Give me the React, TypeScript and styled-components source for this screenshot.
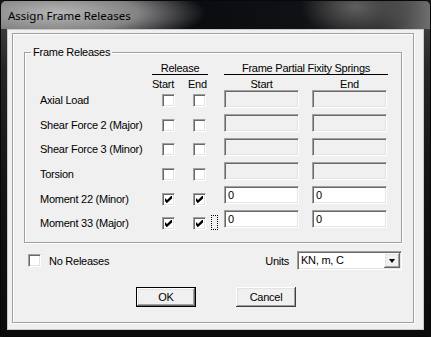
import { Fragment } from "react";
import { createGlobalStyle, styled } from "styled-components";

const GlobalStyle = createGlobalStyle`
  html, body {
    margin: 0;
    padding: 0;
    background: #151515;
  }
  body {
    font-family: "Liberation Sans", Arial, sans-serif;
    font-size: 11px;
    letter-spacing: -0.25px;
    color: #000;
  }
`;

const Window = styled.div`
  width: 431px;
  height: 337px;
  box-sizing: border-box;
  display: flex;
  flex-direction: column;
  border: 1px solid #080808;
  border-radius: 6px 6px 3px 3px;
  overflow: hidden;
  background: linear-gradient(180deg, #4a4a4a 0%, #262626 20%, #141414 55%, #0b0b0b 100%);
`;

const TitleBar = styled.div`
  height: 28px;
  flex: none;
  display: flex;
  align-items: center;
  padding-left: 7px;
  font-family: "Noto Sans", "Open Sans", sans-serif;
  font-size: 11.5px;
  letter-spacing: 0;
  color: #000;
  background:
    radial-gradient(ellipse 150px 34px at 55px 12px, rgba(190, 190, 190, 0.95) 0%, rgba(150, 150, 150, 0.85) 55%, rgba(120, 120, 120, 0) 100%),
    radial-gradient(ellipse 55px 30px at 355px 6px, rgba(110, 110, 110, 0.8), rgba(90, 90, 90, 0) 100%),
    linear-gradient(90deg, #1d1f23 0%, #0b0c10 45%, #101114 70%, #2a2a2a 88%, #6e6e6e 100%);
`;

const Client = styled.div`
  flex: 1;
  margin: 0 6px 6px;
  background: #f0f0f0;
  border: 1px solid #c9c9c9;
`;

const Panel = styled.div`
  width: 402px;
  height: 290px;
  box-sizing: border-box;
  margin: 3px 0 0 4px;
  border: 1px solid #a0a0a0;
  box-shadow: 1px 1px 0 #fff, inset 1px 1px 0 #fff;
  display: flex;
  flex-direction: column;
`;

const GroupBox = styled.div`
  position: relative;
  width: 378px;
  height: 191px;
  box-sizing: border-box;
  margin: 18px 0 0 11px;
  border: 1px solid #a0a0a0;
  box-shadow: 1px 1px 0 #fff, inset 1px 1px 0 #fff;
  display: flex;
  padding: 9px 0 0 15px;
`;

const Legend = styled.span`
  position: absolute;
  left: 6px;
  top: -7px;
  padding: 0 2px;
  line-height: 13px;
  background: #f0f0f0;
`;

const ReleaseGrid = styled.div`
  display: grid;
  grid-template-columns: 112px 32px 26px 14px;
  grid-template-rows: 13px 16px repeat(6, 24.7px);
  align-items: start;
`;

const HeadCell = styled.div`
  grid-column: 2 / 4;
`;

const Heading = styled.div<{ $width: number }>`
  width: ${(p) => p.$width}px;
  height: 12px;
  line-height: 12px;
  text-align: center;
  border-bottom: 1px solid #000;
  white-space: nowrap;
`;

const SubHead = styled.div<{ $indent?: number }>`
  height: 16px;
  line-height: 18px;
  padding-left: ${(p) => p.$indent ?? 0}px;
`;

const RowLabel = styled.div`
  margin-top: 3px;
  line-height: 13px;
  white-space: nowrap;
`;

const Box = styled.div<{ $indent?: number; $top?: number }>`
  width: 13px;
  height: 13px;
  box-sizing: border-box;
  margin-left: ${(p) => p.$indent ?? 0}px;
  margin-top: ${(p) => p.$top ?? 3}px;
  background: #fff;
  border-style: solid;
  border-width: 1px;
  border-color: #a0a0a0 #fff #fff #a0a0a0;
  box-shadow: inset 1px 1px 0 #696969, inset -1px -1px 0 #e3e3e3;
  display: flex;
  align-items: center;
  justify-content: center;
  flex: none;
`;

const FocusRect = styled.div`
  width: 7px;
  height: 15px;
  box-sizing: border-box;
  margin: 1px 0 0 1px;
  border: 1px dotted #000;
`;

const SpringBlock = styled.div`
  display: flex;
  flex-direction: column;
`;

const SpringCols = styled.div`
  display: grid;
  grid-template-columns: 75px 75px;
  column-gap: 13px;
`;

const SpringHead = styled.div`
  height: 15px;
  line-height: 18px;
  text-align: center;
`;

const FieldGrid = styled(SpringCols)`
  row-gap: 6px;
`;

const Field = styled.div<{ $enabled?: boolean }>`
  height: 18px;
  box-sizing: border-box;
  padding-left: 3px;
  line-height: 16px;
  background: ${(p) => (p.$enabled ? "#fff" : "#f0f0f0")};
  border-style: solid;
  border-width: 1px;
  border-color: #a0a0a0 #fff #fff #a0a0a0;
  box-shadow: inset 1px 1px 0 #696969, inset -1px -1px 0 #e3e3e3;
`;

const OptionsRow = styled.div`
  display: flex;
  align-items: center;
  height: 19px;
  margin-top: 8px;
  padding: 0 11px 0 15px;
`;

const OptionLabel = styled.span`
  margin-left: 8px;
`;

const UnitsLabel = styled.span`
  margin-left: auto;
  margin-right: 8px;
`;

const Combo = styled.div`
  width: 105px;
  height: 19px;
  box-sizing: border-box;
  display: flex;
  align-items: stretch;
  background: #fff;
  border-style: solid;
  border-width: 1px;
  border-color: #a0a0a0 #fff #fff #a0a0a0;
  box-shadow: inset 1px 1px 0 #696969, inset -1px -1px 0 #e3e3e3;
`;

const ComboText = styled.span`
  flex: 1;
  padding-left: 3px;
  line-height: 17px;
`;

const DropButton = styled.div`
  width: 16px;
  margin: 1px;
  background: #f0f0f0;
  box-shadow: inset -1px -1px 0 #696969, inset 1px 1px 0 #fff, inset -2px -2px 0 #a0a0a0, inset 2px 2px 0 #e3e3e3;
  display: flex;
  align-items: center;
  justify-content: center;
`;

const Arrow = styled.span`
  width: 0;
  height: 0;
  border-left: 3.5px solid transparent;
  border-right: 3.5px solid transparent;
  border-top: 4px solid #000;
`;

const ButtonRow = styled.div`
  display: flex;
  gap: 40px;
  margin-top: 17px;
  padding-left: 123px;
`;

const PushButton = styled.button<{ $default?: boolean }>`
  width: 60px;
  height: 20px;
  box-sizing: border-box;
  padding: 0;
  font: inherit;
  letter-spacing: inherit;
  color: #000;
  background: #f0f0f0;
  border: ${(p) => (p.$default ? "1px solid #000" : "0")};
  box-shadow: ${(p) =>
    p.$default
      ? "inset -1px -1px 0 #696969, inset 1px 1px 0 #fff, inset -2px -2px 0 #a0a0a0, inset 2px 2px 0 #e3e3e3"
      : "inset -1px -1px 0 #404040, inset 1px 1px 0 #fff, inset -2px -2px 0 #a0a0a0, inset 2px 2px 0 #e3e3e3"};
`;

function Check() {
  return (
    <svg width="7" height="7" viewBox="0 0 7 7">
      <path d="M0 2 L2 4 L6 0 L7 0 L7 2.5 L2 7 L1.5 7 L0 5 Z" fill="#000" />
    </svg>
  );
}

const rows = [
  { label: "Axial Load", start: false, end: false },
  { label: "Shear Force 2 (Major)", start: false, end: false },
  { label: "Shear Force 3 (Minor)", start: false, end: false },
  { label: "Torsion", start: false, end: false },
  { label: "Moment 22 (Minor)", start: true, end: true },
  { label: "Moment 33 (Major)", start: true, end: true },
];

export default function App() {
  return (
    <>
      <GlobalStyle />
      <Window>
        <TitleBar>Assign Frame Releases</TitleBar>
        <Client>
          <Panel>
            <GroupBox>
              <Legend>Frame Releases</Legend>
              <ReleaseGrid>
                <div />
                <HeadCell>
                  <Heading $width={56}>Release</Heading>
                </HeadCell>
                <div />
                <div />
                <SubHead>Start</SubHead>
                <SubHead $indent={4}>End</SubHead>
                <div />
                {rows.map((r, i) => (
                  <Fragment key={r.label}>
                    <RowLabel>{r.label}</RowLabel>
                    <Box $indent={10}>{r.start && <Check />}</Box>
                    <Box $indent={9}>{r.end && <Check />}</Box>
                    {i === rows.length - 1 ? <FocusRect /> : <div />}
                  </Fragment>
                ))}
              </ReleaseGrid>
              <SpringBlock>
                <Heading $width={164}>Frame Partial Fixity Springs</Heading>
                <SpringCols>
                  <SpringHead>Start</SpringHead>
                  <SpringHead>End</SpringHead>
                </SpringCols>
                <FieldGrid>
                  {rows.map((r) => (
                    <Fragment key={r.label}>
                      <Field $enabled={r.start}>{r.start ? "0" : ""}</Field>
                      <Field $enabled={r.end}>{r.end ? "0" : ""}</Field>
                    </Fragment>
                  ))}
                </FieldGrid>
              </SpringBlock>
            </GroupBox>
            <OptionsRow>
              <Box $top={0} />
              <OptionLabel>No Releases</OptionLabel>
              <UnitsLabel>Units</UnitsLabel>
              <Combo>
                <ComboText>KN, m, C</ComboText>
                <DropButton>
                  <Arrow />
                </DropButton>
              </Combo>
            </OptionsRow>
            <ButtonRow>
              <PushButton $default>OK</PushButton>
              <PushButton>Cancel</PushButton>
            </ButtonRow>
          </Panel>
        </Client>
      </Window>
    </>
  );
}
